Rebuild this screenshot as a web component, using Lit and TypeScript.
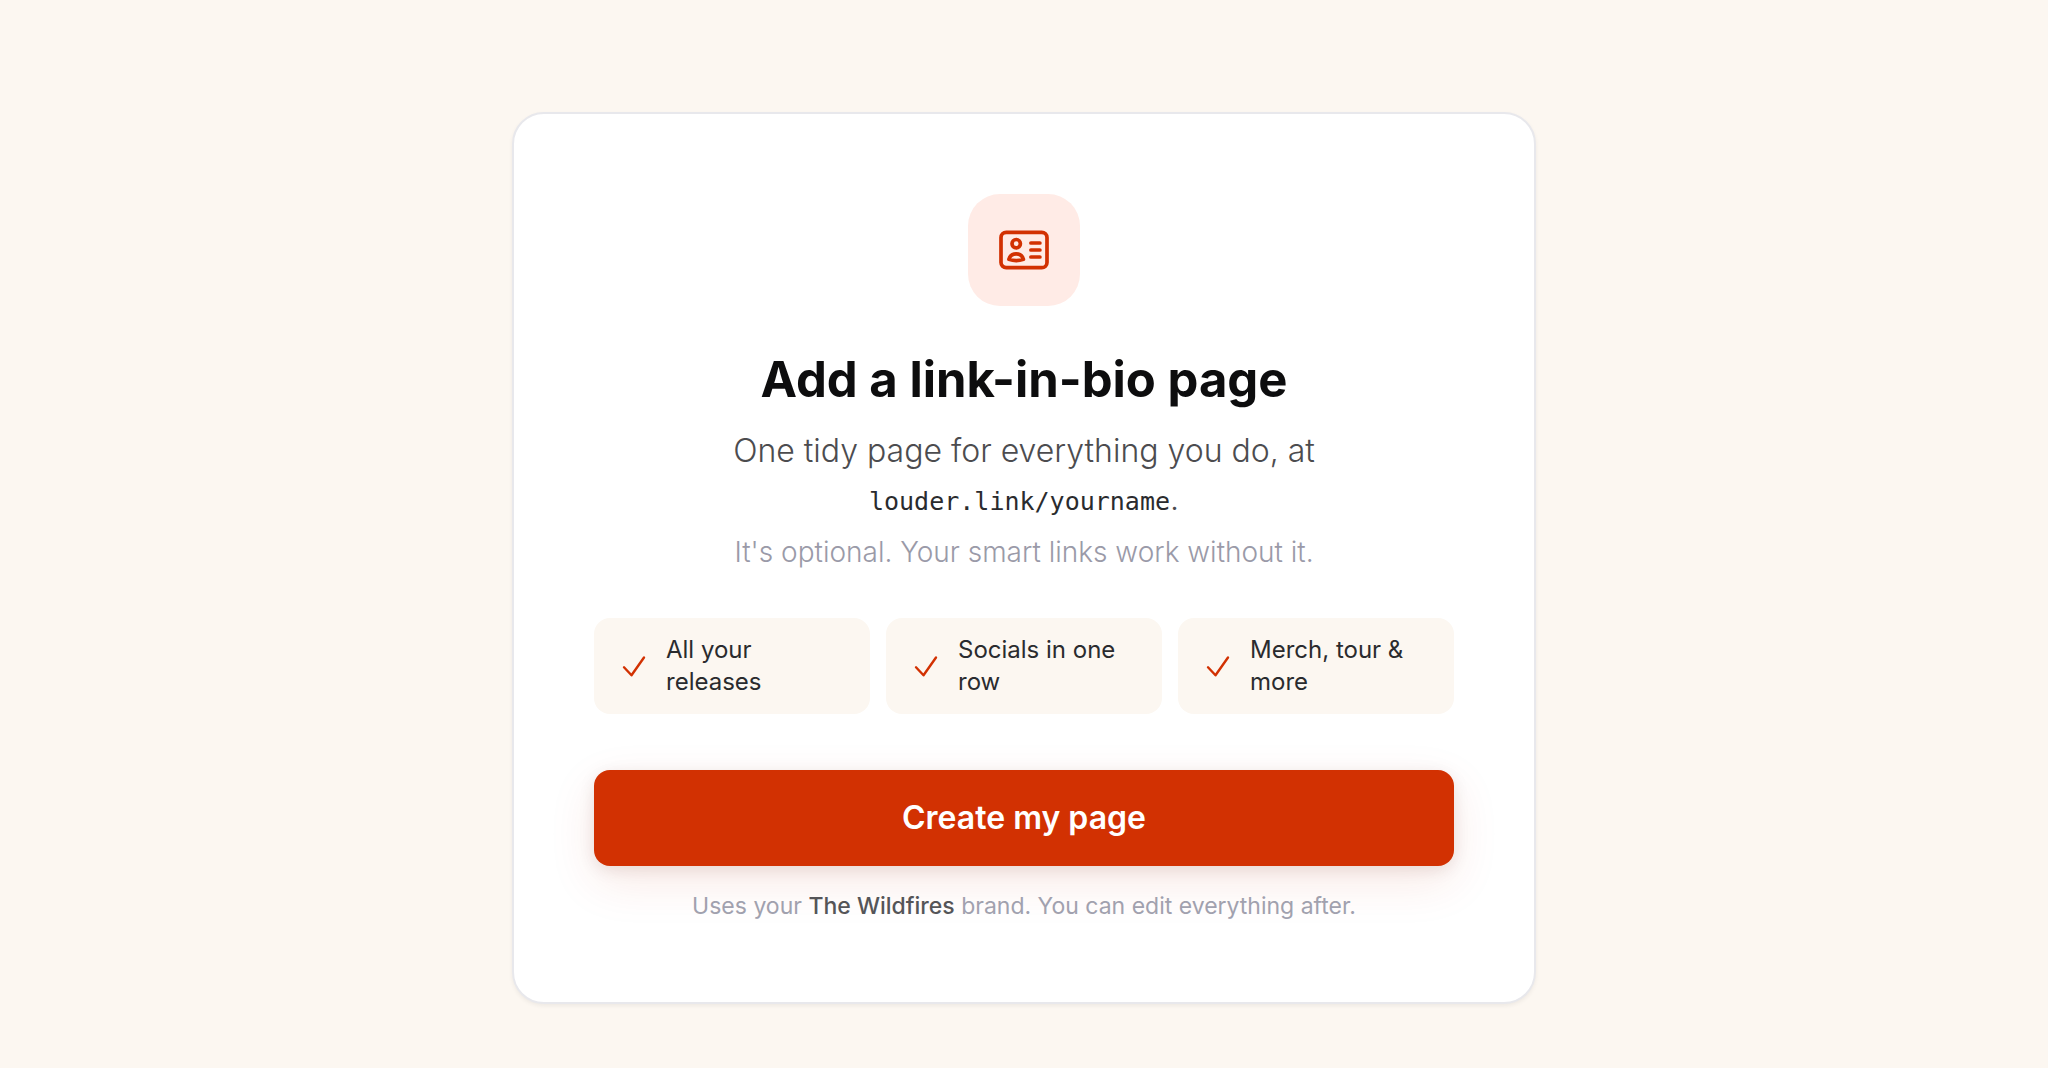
import { LitElement, html, css } from "lit";
import { customElement } from "lit/decorators.js";

@customElement("app-root")
export class AppRoot extends LitElement {
  static styles = css`
    :host {
      display: block;
      box-sizing: border-box;
      min-height: 100vh;
      padding: 112px 24px 64px;
      background: #fcf7f1;
      color: #2a2b2e;
      font-family: Inter, "Open Sans", sans-serif;
    }
    .card {
      box-sizing: border-box;
      max-width: 1024px;
      margin: 0 auto;
      padding: 80px;
      border: 2px solid #e8e8ec;
      border-radius: 32px;
      background: #fff;
      box-shadow: 0 2px 4px rgba(0, 0, 0, 0.06);
      text-align: center;
    }
    .tile {
      display: grid;
      place-items: center;
      width: 112px;
      height: 112px;
      margin: 0 auto 40px;
      border-radius: 32px;
      background: #ffebe6;
      color: #d23102;
    }
    h1 {
      margin: 0 0 14px;
      font-size: 49px;
      line-height: 67px;
      font-weight: 700;
      color: #0d0d0e;
    }
    p {
      margin: 0;
    }
    .lead {
      font-size: 32px;
      line-height: 48px;
      font-weight: 300;
      color: #4c4c4f;
    }
    code {
      font-family: "DejaVu Sans Mono", monospace;
      font-size: 25px;
      line-height: 1;
      color: #2a2b2e;
    }
    .aside {
      margin-top: 4px;
      font-size: 28px;
      line-height: 51px;
      font-weight: 300;
      color: #9a9aa8;
    }
    .features {
      display: grid;
      grid-template-columns: repeat(3, 1fr);
      gap: 16px;
      margin: 40px 0 56px;
      padding: 0;
      list-style: none;
    }
    .feature {
      display: flex;
      align-items: center;
      gap: 16px;
      padding: 16px 24px;
      border-radius: 16px;
      background: #fcf7f1;
      font-size: 24px;
      line-height: 32px;
      text-align: left;
    }
    .check {
      flex: none;
      color: #d23102;
    }
    .create {
      display: block;
      width: 100%;
      padding: 24px;
      border: 0;
      border-radius: 16px;
      background: #d23102;
      box-shadow: 0 16px 48px rgba(210, 49, 2, 0.1), 0 4px 16px rgba(60, 20, 0, 0.1);
      color: #fff;
      font: inherit;
      font-size: 32px;
      line-height: 48px;
      font-weight: 600;
      cursor: pointer;
    }
    .note {
      margin-top: 24px;
      font-size: 23px;
      line-height: 32px;
      color: #a1a1ae;
    }
    .brand {
      font-weight: 500;
      color: #555558;
    }
  `;

  private features = ["All your releases", "Socials in one row", "Merch, tour & more"];

  render() {
    return html`
      <main class="card">
        <div class="tile">
          <svg width="56" height="56" viewBox="0 0 56 56" fill="none" stroke="currentColor"
            stroke-width="3.7" stroke-linecap="round" stroke-linejoin="round" aria-hidden="true">
            <rect x="5" y="10.3" width="46" height="35.4" rx="5.25" />
            <circle cx="20.2" cy="21.7" r="4.2" />
            <path d="M12.9 37.3C13.8 34 16.7 31.9 20.2 31.9s6.3 2.1 7.2 5.4C25.2 38.1 22.7 38.6 20.2 38.6s-5-.5-7.3-1.3z" />
            <path d="M34.9 21h9M34.9 28h9M34.9 35h9" />
          </svg>
        </div>
        <h1>Add a link-in-bio page</h1>
        <p class="lead">One tidy page for everything you do, at <code>louder.link/yourname</code>.</p>
        <p class="aside">It's optional. Your smart links work without it.</p>
        <ul class="features">
          ${this.features.map(
            (label) => html`<li class="feature">
              <svg class="check" width="32" height="32" viewBox="0 0 32 32" fill="none"
                stroke="currentColor" stroke-width="2.4" stroke-linecap="round" stroke-linejoin="round" aria-hidden="true">
                <path d="M6 17.3l7.5 8L26 7.5" />
              </svg>
              <span>${label}</span>
            </li>`,
          )}
        </ul>
        <button class="create" type="button">Create my page</button>
        <p class="note">Uses your <span class="brand">The Wildfires</span> brand. You can edit everything after.</p>
      </main>
    `;
  }
}
